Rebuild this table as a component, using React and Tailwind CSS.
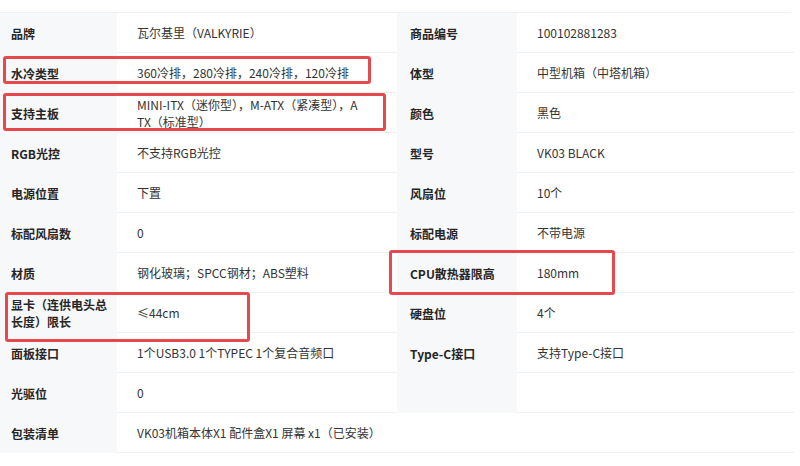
const rows = [
  { l1: "品牌", v1: "瓦尔基里（VALKYRIE）", l2: "商品编号", v2: "100102881283" },
  { l1: "水冷类型", v1: "360冷排，280冷排，240冷排，120冷排", l2: "体型", v2: "中型机箱（中塔机箱）" },
  {
    l1: "支持主板",
    v1: (
      <>
        MINI-ITX（迷你型），M-ATX（紧凑型），A
        <br />
        TX（标准型）
      </>
    ),
    l2: "颜色",
    v2: "黑色",
  },
  { l1: "RGB光控", v1: "不支持RGB光控", l2: "型号", v2: "VK03 BLACK" },
  { l1: "电源位置", v1: "下置", l2: "风扇位", v2: "10个" },
  { l1: "标配风扇数", v1: "0", l2: "标配电源", v2: "不带电源" },
  { l1: "材质", v1: "钢化玻璃；SPCC钢材；ABS塑料", l2: "CPU散热器限高", v2: "180mm" },
  {
    l1: (
      <>
        显卡（连供电头总
        <br />
        长度）限长
      </>
    ),
    v1: "≤44cm",
    l2: "硬盘位",
    v2: "4个",
  },
  { l1: "面板接口", v1: "1个USB3.0 1个TYPEC 1个复合音频口", l2: "Type-C接口", v2: "支持Type-C接口" },
  { l1: "光驱位", v1: "0", l2: "", v2: "" },
];

function Label({ children, pad = "pl-[11px]" }) {
  return (
    <div className={`flex h-10 items-center bg-[#f7f8fa] ${pad} pr-2 text-[12px] font-bold leading-[17px] text-[#262626]`}>
      <div>{children}</div>
    </div>
  );
}

function Value({ children, span = "" }) {
  return (
    <div className={`flex h-10 items-center border-b border-[#f0f1f3] bg-white px-5 text-[12px] leading-[17px] text-[#333] ${span}`}>
      <div>{children}</div>
    </div>
  );
}

function Mark({ className }) {
  return <div className={`pointer-events-none absolute rounded-[3px] border-[3px] border-[#e5484d] ${className}`} />;
}

export default function App() {
  return (
    <div
      className="relative h-[466px] w-[800px] overflow-hidden bg-white pt-3"
      style={{ fontFamily: '"Noto Sans CJK SC", "Noto Sans", sans-serif' }}
    >
      <div className="grid w-[795px] grid-cols-[117px_280px_120px_278px] rounded-tr-md border-r border-t border-[#f0f1f3]">
        {rows.map((r, i) => (
          <div key={i} className="contents">
            <Label>{r.l1}</Label>
            <Value>{r.v1}</Value>
            <Label pad="pl-[13px]">{r.l2}</Label>
            <Value>{r.v2}</Value>
          </div>
        ))}
        <Label>包装清单</Label>
        <Value span="col-span-3">VK03机箱本体X1 配件盒X1 屏幕 x1（已安装）</Value>
      </div>

      <Mark className="left-[3px] top-[56px] h-[28px] w-[368px]" />
      <Mark className="left-[3px] top-[93px] h-[38px] w-[383px]" />
      <Mark className="left-[389px] top-[250px] h-[45px] w-[226px]" />
      <Mark className="left-[5px] top-[292px] h-[50px] w-[245px]" />
    </div>
  );
}
